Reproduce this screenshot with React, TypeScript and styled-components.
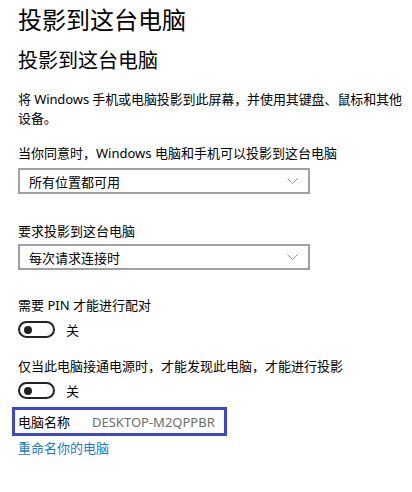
import React from 'react';
import styled, { createGlobalStyle } from 'styled-components';

const GlobalStyle = createGlobalStyle`
  body {
    margin: 0;
    background: #fff;
    font-family: 'Noto Sans', 'Noto Sans CJK SC', sans-serif;
    color: #000;
  }
`;

const Page = styled.div`
  width: 412px;
  height: 492px;
  box-sizing: border-box;
  padding: 4px 2px 0 18px;
  display: flex;
  flex-direction: column;
  align-items: flex-start;
  overflow: hidden;
`;

const Title = styled.h1`
  margin: 0;
  font-size: 24px;
  font-weight: 400;
  line-height: 32px;
`;

const Subtitle = styled.h2`
  margin: 12px 0 0;
  font-size: 20px;
  font-weight: 400;
  line-height: 26px;
`;

const Paragraph = styled.p`
  margin: 16px 0 0;
  font-size: 13px;
  line-height: 19px;
  letter-spacing: -0.1px;
`;

const Label = styled.div<{ $gap: number }>`
  margin-top: ${(p) => p.$gap}px;
  font-size: 13px;
  line-height: 20px;
`;

const Select = styled.div<{ $gap: number }>`
  margin-top: ${(p) => p.$gap}px;
  width: 292px;
  height: 26px;
  box-sizing: border-box;
  border: 2px solid #a0a0a0;
  padding: 0 10px 0 9px;
  display: flex;
  align-items: center;
  justify-content: space-between;
  font-size: 13px;
`;

const ToggleRow = styled.div`
  margin-top: 6px;
  display: flex;
  align-items: center;
  gap: 11px;
  font-size: 13px;
  height: 17px;
`;

const Switch = styled.div`
  width: 37px;
  height: 17px;
  box-sizing: border-box;
  border: 2px solid #222;
  border-radius: 9px;
  display: flex;
  align-items: center;
  padding-left: 4px;
`;

const Knob = styled.span`
  width: 8px;
  height: 8px;
  border-radius: 50%;
  background: #222;
`;

const NameBox = styled.div`
  margin: 8px 0 0 -6px;
  width: 215px;
  height: 29px;
  box-sizing: border-box;
  border: 3px solid #3f48cc;
  padding-left: 3px;
  display: flex;
  align-items: center;
  gap: 22px;
  font-size: 13px;
`;

const PcName = styled.span`
  color: #6e6e6e;
`;

const Link = styled.a`
  margin-top: 2px;
  font-size: 13px;
  line-height: 20px;
  color: #1a7ad4;
  text-decoration: none;
`;

function Chevron() {
  return (
    <svg width="11" height="6" viewBox="0 0 11 6">
      <path d="M0.5 0.5 L5.5 5.5 L10.5 0.5" fill="none" stroke="#9a9a9a" strokeWidth="1" />
    </svg>
  );
}

function Toggle() {
  return (
    <ToggleRow>
      <Switch>
        <Knob />
      </Switch>
      <span>关</span>
    </ToggleRow>
  );
}

export default function App() {
  return (
    <Page>
      <GlobalStyle />
      <Title>投影到这台电脑</Title>
      <Subtitle>投影到这台电脑</Subtitle>
      <Paragraph>将 Windows 手机或电脑投影到此屏幕，并使用其键盘、鼠标和其他设备。</Paragraph>

      <Label $gap={15}>当你同意时，Windows 电脑和手机可以投影到这台电脑</Label>
      <Select $gap={5}>
        <span>所有位置都可用</span>
        <Chevron />
      </Select>

      <Label $gap={27}>要求投影到这台电脑</Label>
      <Select $gap={3}>
        <span>每次请求连接时</span>
        <Chevron />
      </Select>

      <Label $gap={25}>需要 PIN 才能进行配对</Label>
      <Toggle />

      <Label $gap={18}>仅当此电脑接通电源时，才能发现此电脑，才能进行投影</Label>
      <Toggle />

      <NameBox>
        <span>电脑名称</span>
        <PcName>DESKTOP-M2QPPBR</PcName>
      </NameBox>
      <Link href="#">重命名你的电脑</Link>
    </Page>
  );
}
